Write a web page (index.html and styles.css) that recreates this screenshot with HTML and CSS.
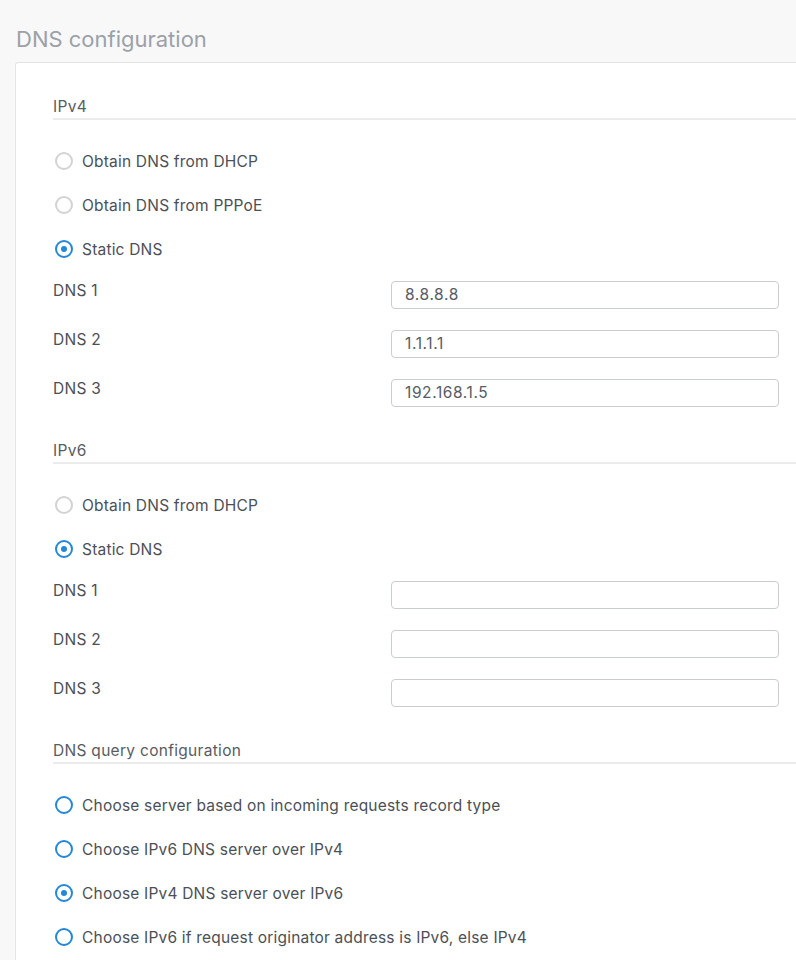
FILE: index.html
```html
<!DOCTYPE html>
<html>
<head>
<meta charset="utf-8">
<link rel="stylesheet" href="styles.css">
</head>
<body>
<div class="page">
  <h1 class="title">DNS configuration</h1>
  <div class="card">
    <div class="section">
      <div class="heading">IPv4</div>
      <div class="options">
        <label class="radio-row"><span class="radio"></span><span>Obtain DNS from DHCP</span></label>
        <label class="radio-row"><span class="radio"></span><span>Obtain DNS from PPPoE</span></label>
        <label class="radio-row"><span class="radio checked"></span><span>Static DNS</span></label>
      </div>
      <div class="fields">
        <div class="field"><span class="field-label">DNS 1</span><div class="input">8.8.8.8</div></div>
        <div class="field"><span class="field-label">DNS 2</span><div class="input">1.1.1.1</div></div>
        <div class="field"><span class="field-label">DNS 3</span><div class="input">192.168.1.5</div></div>
      </div>
    </div>
    <div class="section">
      <div class="heading">IPv6</div>
      <div class="options">
        <label class="radio-row"><span class="radio"></span><span>Obtain DNS from DHCP</span></label>
        <label class="radio-row"><span class="radio checked"></span><span>Static DNS</span></label>
      </div>
      <div class="fields">
        <div class="field"><span class="field-label">DNS 1</span><div class="input"></div></div>
        <div class="field"><span class="field-label">DNS 2</span><div class="input"></div></div>
        <div class="field"><span class="field-label">DNS 3</span><div class="input"></div></div>
      </div>
    </div>
    <div class="section">
      <div class="heading">DNS query configuration</div>
      <div class="options">
        <label class="radio-row"><span class="radio blue"></span><span>Choose server based on incoming requests record type</span></label>
        <label class="radio-row"><span class="radio blue"></span><span>Choose IPv6 DNS server over IPv4</span></label>
        <label class="radio-row"><span class="radio checked"></span><span>Choose IPv4 DNS server over IPv6</span></label>
        <label class="radio-row"><span class="radio blue"></span><span>Choose IPv6 if request originator address is IPv6, else IPv4</span></label>
      </div>
    </div>
  </div>
</div>
</body>
</html>
```
FILE: styles.css
```css
html, body {
  margin: 0;
  padding: 0;
  background: #f8f8f8;
  font-family: Inter, "Noto Sans", "Liberation Sans", sans-serif;
  color: #4c5056;
  overflow: hidden;
}
.page {
  padding: 0 0 0 15px;
}
.title {
  margin: 0;
  padding: 25px 0 0 1px;
  height: 37px;
  font-size: 22px;
  font-weight: 400;
  color: #9ba1a8;
  line-height: 28px;
}
.card {
  background: #fff;
  border: 1px solid #e4e4e4;
  border-right: none;
  border-radius: 3px 0 0 0;
  padding: 34px 0 0 37px;
  height: 900px;
}
.heading {
  font-size: 15.5px;
  letter-spacing: 0.3px;
  line-height: 20px;
  color: #575c63;
  padding-bottom: 1px;
  border-bottom: 2px solid #ebebeb;
}
.options {
  display: flex;
  flex-direction: column;
  gap: 22px;
  padding: 30px 0 0 2px;
}
.radio-row {
  display: flex;
  align-items: center;
  gap: 9px;
  height: 22px;
  font-size: 15.5px;
  letter-spacing: 0.2px;
  color: #4c5056;
}
.radio {
  width: 18px;
  height: 18px;
  box-sizing: border-box;
  border-radius: 50%;
  border: 2px solid #d3d3d3;
  position: relative;
  flex: none;
}
.radio.blue,
.radio.checked {
  border-color: #2588d6;
}
.radio.checked::after {
  content: "";
  position: absolute;
  left: 4px;
  top: 4px;
  width: 6px;
  height: 6px;
  border-radius: 50%;
  background: #2588d6;
}
.fields {
  display: flex;
  flex-direction: column;
  gap: 21px;
  padding: 21px 17px 34px 0;
}
.field {
  display: flex;
  justify-content: space-between;
  align-items: flex-start;
}
.field-label {
  font-size: 15.5px;
  letter-spacing: 0.3px;
  line-height: 20px;
}
.input {
  width: 388px;
  height: 28px;
  box-sizing: border-box;
  border: 1px solid #c9cdd1;
  border-radius: 4px;
  font-size: 15.5px;
  line-height: 26px;
  padding-left: 13px;
  color: #575c63;
  letter-spacing: 0.6px;
}
```
